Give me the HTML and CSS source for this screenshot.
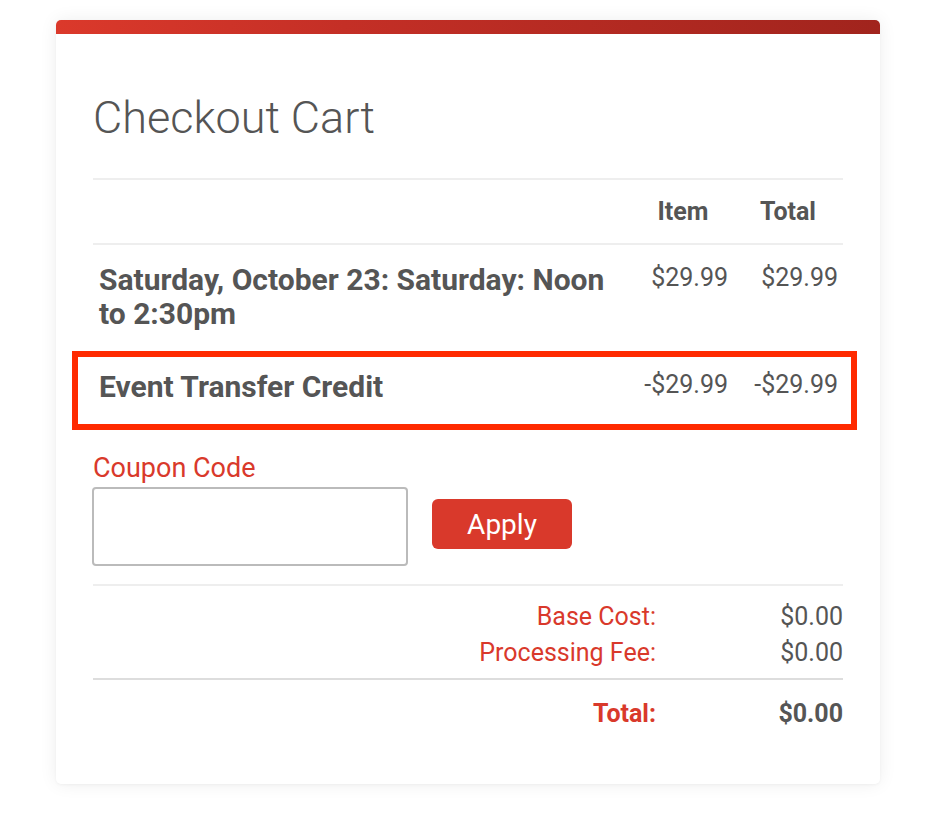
FILE: index.html
```html
<!DOCTYPE html>
<html>
<head>
<meta charset="utf-8">
<link rel="stylesheet" href="styles.css">
</head>
<body>
<div class="card">
  <div class="card-bar"></div>
  <div class="card-body">
    <h1 class="title">Checkout Cart</h1>
    <div class="cart">
      <div class="cart-row cart-head">
        <div class="c-desc"></div>
        <div class="c-item">Item</div>
        <div class="c-total">Total</div>
      </div>
      <div class="cart-row cart-line">
        <div class="c-desc">Saturday, October 23: Saturday: Noon to 2:30pm</div>
        <div class="c-item">$29.99</div>
        <div class="c-total">$29.99</div>
      </div>
      <div class="cart-row cart-line cart-credit">
        <div class="c-desc">Event Transfer Credit</div>
        <div class="c-item">-$29.99</div>
        <div class="c-total">-$29.99</div>
        <div class="highlight"></div>
      </div>
    </div>
    <div class="coupon">
      <label class="coupon-label" for="coupon">Coupon Code</label>
      <div class="coupon-row">
        <input id="coupon" class="coupon-input" type="text">
        <button class="apply-btn" type="button">Apply</button>
      </div>
    </div>
    <div class="summary">
      <div class="sum-row"><span class="sum-label">Base Cost:</span><span class="sum-value">$0.00</span></div>
      <div class="sum-row"><span class="sum-label">Processing Fee:</span><span class="sum-value">$0.00</span></div>
      <div class="sum-row sum-total"><span class="sum-label">Total:</span><span class="sum-value">$0.00</span></div>
    </div>
  </div>
</div>
</body>
</html>
```
FILE: styles.css
```css
* { box-sizing: border-box; }
html, body { margin: 0; padding: 0; background: #fff; }
body {
  font-family: Roboto, "Liberation Sans", Arial, sans-serif;
  color: #555;
  padding: 20px 46px 40px 56px;
}
.card {
  width: 824px;
  background: #fff;
  border-radius: 5px;
  box-shadow: 0 0 18px rgba(0,0,0,0.07), 0 1px 3px rgba(0,0,0,0.04);
}
.card-bar {
  height: 14px;
  border-radius: 5px 5px 0 0;
  background: linear-gradient(90deg, #db392b 0%, #c42f26 35%, #a1241d 100%);
}
.card-body {
  padding: 0 37px 52px 37px;
}
.title {
  margin: 0;
  padding: 59px 0 35px;
  font-weight: 300;
  font-size: 45px;
  line-height: 50px;
  color: #555;
}
.cart {
  border-top: 2px solid #eee;
}
.cart-row {
  display: grid;
  grid-template-columns: 1fr 100px 110px;
  position: relative;
}
.cart-head {
  height: 65px;
  align-items: center;
  font-weight: 700;
  font-size: 25px;
  border-bottom: 2px solid #eee;
}
.cart-head .c-item, .cart-head .c-total { text-align: center; }
.cart-line .c-desc {
  font-weight: 700;
  font-size: 30px;
  line-height: 34px;
  padding: 0 8px 0 6px;
}
.cart-line .c-item, .cart-line .c-total {
  text-align: right;
  padding-right: 5px;
  font-size: 25px;
  line-height: 30px;
}
.cart-line {
  padding: 18px 0 20px;
}
.cart-credit {
  border-top: 1px dashed #ddd;
  padding: 18px 0 49px;
}
.highlight {
  position: absolute;
  left: -21px;
  right: -14px;
  top: -1px;
  height: 79px;
  border: 6px solid #ff2a00;
  pointer-events: none;
}
.coupon-label {
  display: block;
  color: #d9392b;
  font-size: 27px;
  line-height: 30px;
}
.coupon-row {
  display: flex;
  align-items: flex-start;
  gap: 24px;
  margin-top: 4px;
}
.coupon-input {
  width: 316px;
  height: 79px;
  border: 2px solid #bbb;
  border-radius: 4px;
  font-size: 22px;
  font-family: inherit;
  margin-left: -1px;
}
.apply-btn {
  width: 140px;
  height: 50px;
  margin-top: 12px;
  background: #d9392b;
  color: #fff;
  border: 0;
  border-radius: 6px;
  font-family: inherit;
  font-size: 28px;
  padding: 0;
}
.summary {
  margin-top: 18px;
  border-top: 2px solid #eee;
  padding-top: 13px;
}
.sum-row {
  display: grid;
  grid-template-columns: 1fr 187px;
  font-size: 25px;
  line-height: 36px;
}
.sum-label { text-align: right; color: #d9392b; }
.sum-value { text-align: right; }
.sum-total {
  border-top: 2px solid #ddd;
  margin-top: 7px;
  padding-top: 16px;
  font-weight: 700;
}
```
